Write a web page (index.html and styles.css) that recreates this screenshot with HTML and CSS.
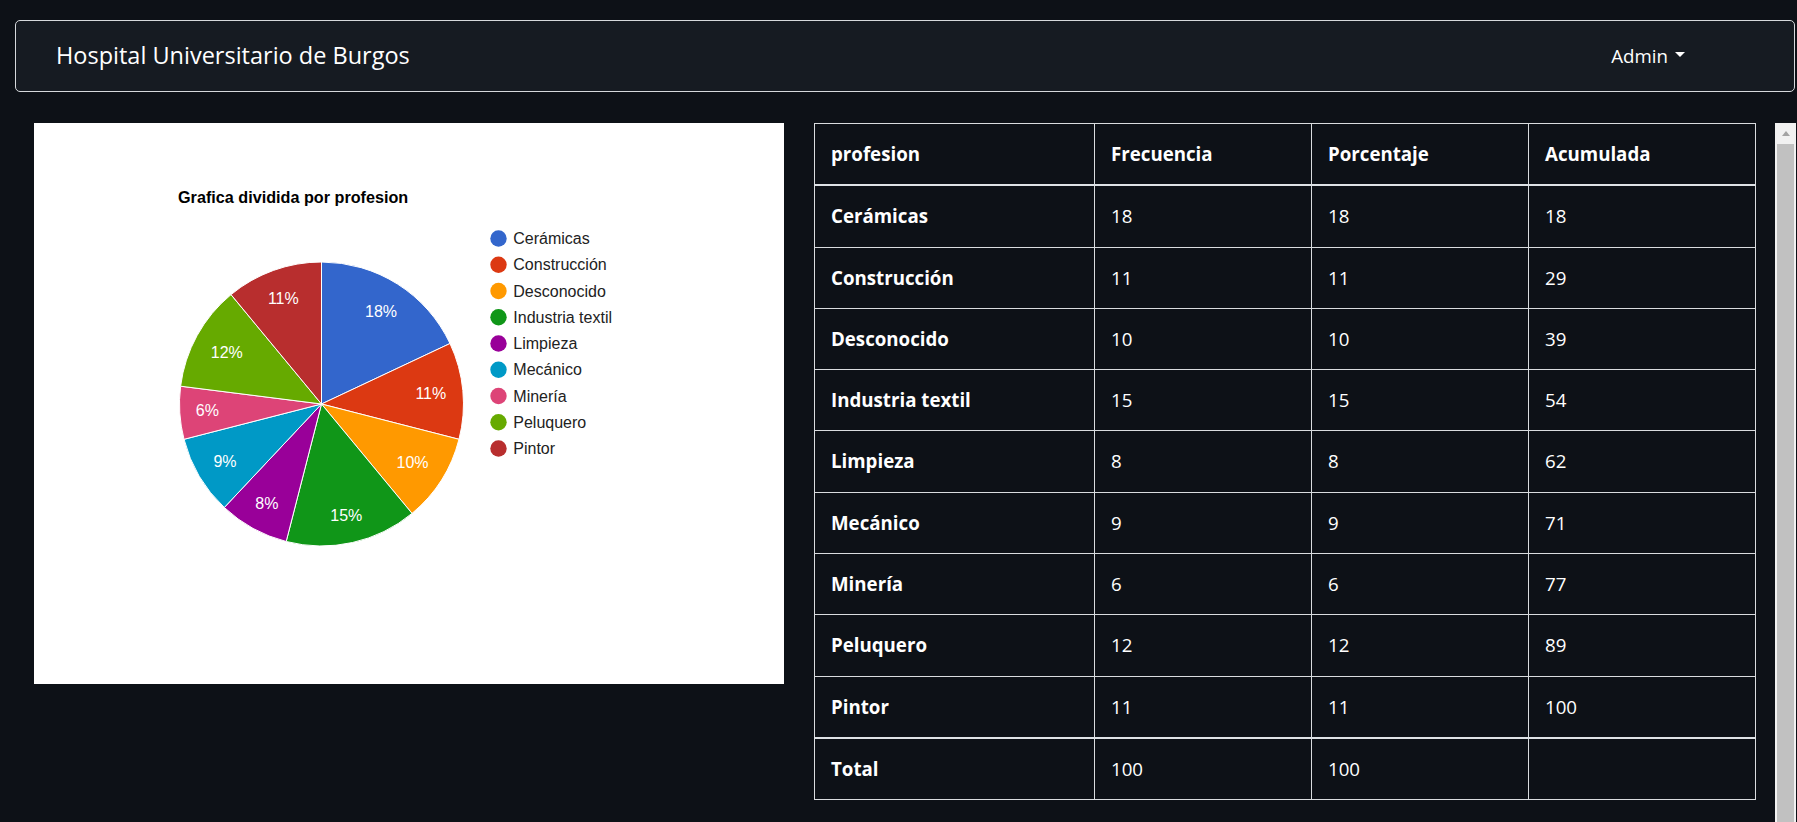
FILE: index.html
```html
<!DOCTYPE html>
<html lang="es">
<head>
<meta charset="utf-8">
<title>Hospital Universitario de Burgos</title>
<link rel="stylesheet" href="styles.css">
</head>
<body>
<nav class="navbar">
  <span class="brand">Hospital Universitario de Burgos</span>
  <span class="user">Admin<span class="caret"></span></span>
</nav>
<main class="main">
  <section class="chart">
    <svg class="chart-svg" width="750" height="561" viewBox="0 0 750 561">
      <text class="chart-title" x="144" y="79.5">Grafica dividida por profesion</text>
      <g class="slices">
        <path fill="#3366cc" d="M287.5 281 L287.5 139 A142 142 0 0 1 416 220.5 Z"/>
        <path fill="#dc3912" d="M287.5 281 L416 220.5 A142 142 0 0 1 425 316.3 Z"/>
        <path fill="#ff9900" d="M287.5 281 L425 316.3 A142 142 0 0 1 378 390.4 Z"/>
        <path fill="#109618" d="M287.5 281 L378 390.4 A142 142 0 0 1 252.2 418.5 Z"/>
        <path fill="#990099" d="M287.5 281 L252.2 418.5 A142 142 0 0 1 190.3 384.5 Z"/>
        <path fill="#0099c6" d="M287.5 281 L190.3 384.5 A142 142 0 0 1 150 316.3 Z"/>
        <path fill="#dd4477" d="M287.5 281 L150 316.3 A142 142 0 0 1 146.6 263.2 Z"/>
        <path fill="#66aa00" d="M287.5 281 L146.6 263.2 A142 142 0 0 1 197 171.6 Z"/>
        <path fill="#b82e2e" d="M287.5 281 L197 171.6 A142 142 0 0 1 287.5 139 Z"/>
      </g>
      <g class="slice-labels">
        <text x="347" y="193.8">18%</text>
        <text x="396.8" y="275.9">11%</text>
        <text x="378.5" y="345.1">10%</text>
        <text x="312.3" y="397.9">15%</text>
        <text x="232.8" y="385.9">8%</text>
        <text x="191" y="343.9">9%</text>
        <text x="173.3" y="293.4">6%</text>
        <text x="192.8" y="235.1">12%</text>
        <text x="249.3" y="181.1">11%</text>
      </g>
      <g class="legend">
        <circle cx="464.5" cy="115.5" r="8.2" fill="#3366cc"/>
        <text x="479.3" y="121">Cerámicas</text>
        <circle cx="464.5" cy="141.75" r="8.2" fill="#dc3912"/>
        <text x="479.3" y="147.25">Construcción</text>
        <circle cx="464.5" cy="168" r="8.2" fill="#ff9900"/>
        <text x="479.3" y="173.5">Desconocido</text>
        <circle cx="464.5" cy="194.25" r="8.2" fill="#109618"/>
        <text x="479.3" y="199.75">Industria textil</text>
        <circle cx="464.5" cy="220.5" r="8.2" fill="#990099"/>
        <text x="479.3" y="226">Limpieza</text>
        <circle cx="464.5" cy="246.75" r="8.2" fill="#0099c6"/>
        <text x="479.3" y="252.25">Mecánico</text>
        <circle cx="464.5" cy="273" r="8.2" fill="#dd4477"/>
        <text x="479.3" y="278.5">Minería</text>
        <circle cx="464.5" cy="299.25" r="8.2" fill="#66aa00"/>
        <text x="479.3" y="304.75">Peluquero</text>
        <circle cx="464.5" cy="325.5" r="8.2" fill="#b82e2e"/>
        <text x="479.3" y="331">Pintor</text>
      </g>
    </svg>
  </section>
  <section class="table-area">
    <table class="data-table">
      <colgroup>
        <col class="c1"><col class="c2"><col class="c3"><col class="c4">
      </colgroup>
      <thead>
        <tr><th>profesion</th><th>Frecuencia</th><th>Porcentaje</th><th>Acumulada</th></tr>
      </thead>
      <tbody>
        <tr><th>Cerámicas</th><td>18</td><td>18</td><td>18</td></tr>
        <tr><th>Construcción</th><td>11</td><td>11</td><td>29</td></tr>
        <tr><th>Desconocido</th><td>10</td><td>10</td><td>39</td></tr>
        <tr><th>Industria textil</th><td>15</td><td>15</td><td>54</td></tr>
        <tr><th>Limpieza</th><td>8</td><td>8</td><td>62</td></tr>
        <tr><th>Mecánico</th><td>9</td><td>9</td><td>71</td></tr>
        <tr><th>Minería</th><td>6</td><td>6</td><td>77</td></tr>
        <tr><th>Peluquero</th><td>12</td><td>12</td><td>89</td></tr>
        <tr><th>Pintor</th><td>11</td><td>11</td><td>100</td></tr>
      </tbody>
      <tfoot>
        <tr><th>Total</th><td>100</td><td>100</td><td></td></tr>
      </tfoot>
    </table>
    <div class="scrollbar">
      <div class="scroll-btn"><span class="scroll-arrow"></span></div>
      <div class="scroll-thumb"></div>
    </div>
  </section>
</main>
</body>
</html>
```
FILE: styles.css
```css
html, body {
  margin: 0;
  padding: 0;
}
body {
  background: #0d1117;
  color: #ffffff;
  font-family: "Open Sans", "Noto Sans", sans-serif;
  font-size: 18.7px;
  overflow: hidden;
  height: 822px;
}

.navbar {
  box-sizing: border-box;
  height: 72px;
  margin: 20px 2px 0 15px;
  border: 1px solid #d6d9dc;
  border-radius: 5px;
  background: #161b22;
  display: flex;
  align-items: center;
  justify-content: space-between;
  padding: 0 109px 0 40px;
}
.brand {
  font-size: 23.5px;
  line-height: 1.5;
  color: #ffffff;
}
.user {
  font-size: 18.7px;
  line-height: 1.5;
  color: #ffffff;
  display: flex;
  align-items: center;
}
.caret {
  display: inline-block;
  width: 0;
  height: 0;
  margin-left: 7px;
  margin-top: -3px;
  border-top: 5.5px solid #ffffff;
  border-left: 5.5px solid transparent;
  border-right: 5.5px solid transparent;
}

.main {
  display: flex;
  align-items: flex-start;
  gap: 30px;
  margin-top: 31px;
  padding-left: 34px;
}

.chart {
  flex: none;
  width: 750px;
  height: 561px;
  background: #ffffff;
}
.chart-svg {
  display: block;
  font-family: "Liberation Sans", Arial, sans-serif;
}
.chart-title {
  font-size: 16.2px;
  font-weight: bold;
  fill: #000000;
}
.slices path {
  stroke: #ffffff;
  stroke-width: 1;
}
.slice-labels text {
  font-size: 16px;
  fill: #ffffff;
  text-anchor: middle;
}
.legend text {
  font-size: 16px;
  fill: #222222;
}

.table-area {
  flex: none;
  display: flex;
  align-items: flex-start;
  gap: 19px;
}

.data-table {
  width: 941px;
  table-layout: fixed;
  border-collapse: collapse;
  color: #ffffff;
  background: #0d1117;
}
.c1 { width: 280px; }
.c2 { width: 217px; }
.c3 { width: 217px; }
.c4 { width: 227px; }

.data-table th,
.data-table td {
  border: 1px solid #d9dcdf;
  padding: 16px 16px;
  line-height: 28.3px;
  text-align: left;
  vertical-align: middle;
}
.data-table th {
  font-weight: 700;
}
.data-table td {
  font-weight: 400;
}
.data-table thead th {
  border-bottom: 2px solid #dee2e6;
}
.data-table tfoot th,
.data-table tfoot td {
  border-top: 2px solid #dee2e6;
}

.scrollbar {
  flex: none;
  width: 21px;
  height: 710px;
  background: #f1f1f1;
  display: flex;
  flex-direction: column;
}
.scroll-btn {
  height: 21px;
  display: flex;
  align-items: center;
  justify-content: center;
}
.scroll-arrow {
  width: 0;
  height: 0;
  border-bottom: 5px solid #a3a3a3;
  border-left: 4.5px solid transparent;
  border-right: 4.5px solid transparent;
}
.scroll-thumb {
  flex: 1;
  margin: 0 2px;
  background: #c1c1c1;
}
```
